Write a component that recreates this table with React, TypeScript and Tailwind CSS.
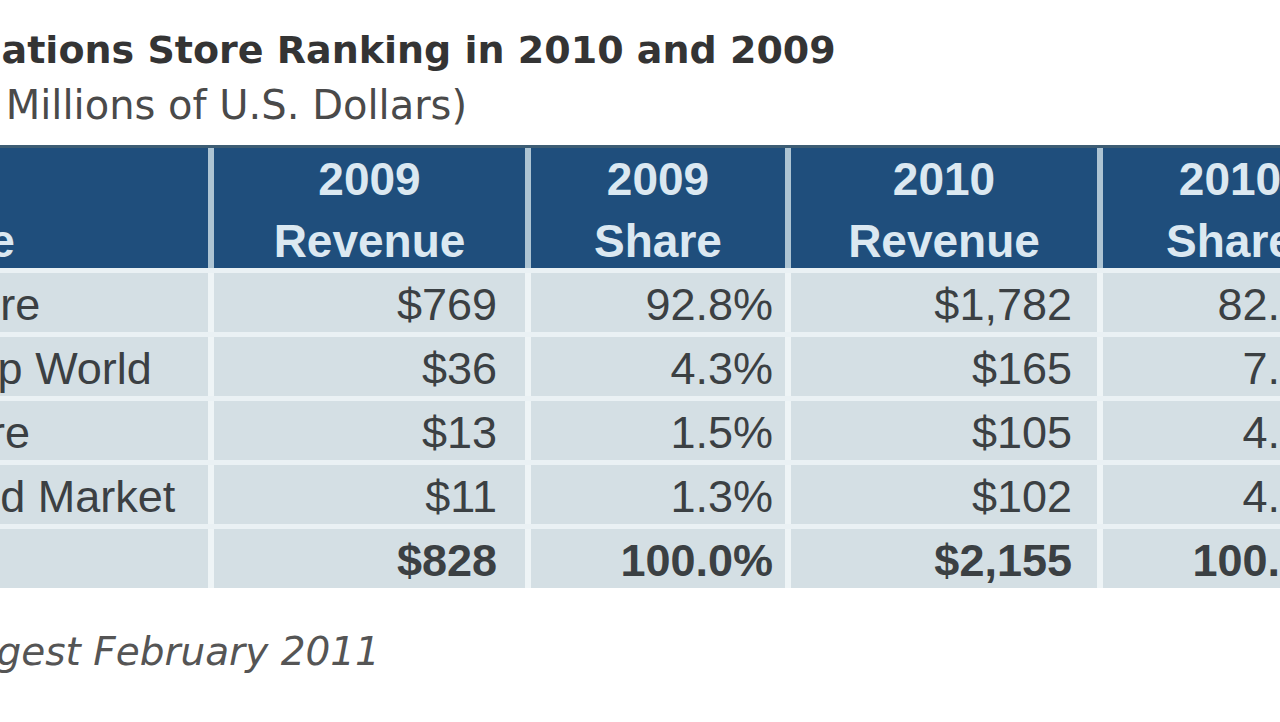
const rows = [
  { store: "Apple App Store", rev09: "$769", share09: "92.8%", rev10: "$1,782", share10: "82.7%" },
  { store: "BlackBerry App World", rev09: "$36", share09: "4.3%", rev10: "$165", share10: "7.7%" },
  { store: "Nokia Ovi Store", rev09: "$13", share09: "1.5%", rev10: "$105", share10: "4.9%" },
  { store: "Google Android Market", rev09: "$11", share09: "1.3%", rev10: "$102", share10: "4.7%" },
  { store: "Total", rev09: "$828", share09: "100.0%", rev10: "$2,155", share10: "100.0%", total: true },
];

const headers = [
  ["\u00a0", "Store"],
  ["2009", "Revenue"],
  ["2009", "Share"],
  ["2010", "Revenue"],
  ["2010", "Share"],
];

const cols = "grid grid-cols-[504px_311px_254px_306px_254px] gap-x-[6px]";

export default function App() {
  return (
    <div className="w-[1280px] h-[722px] overflow-hidden bg-white">
      <div className="-ml-[296px] w-[1700px] flex flex-col">
        <h1 className="mt-[26px] ml-[9px] font-['DejaVu_Sans',sans-serif] font-bold text-[38px] leading-[48px] text-[#343434] whitespace-nowrap">
          Mobile Applications Store Ranking in 2010 and 2009
        </h1>
        <p className="mt-[7px] ml-[50px] font-['DejaVu_Sans',sans-serif] text-[40px] leading-[48px] text-[#4a4a4a] whitespace-nowrap">
          (Revenue in Millions of U.S. Dollars)
        </p>

        <div className="mt-[16px] w-[1647px] bg-[#eaf1f4] flex flex-col gap-y-[5px] font-['Liberation_Sans',Arial,sans-serif]">
          <div className={`${cols} bg-[#adc4d3] border-t-[3px] border-[#3d5d74]`}>
            {headers.map(([a, b], i) => (
              <div
                key={i}
                className="h-[120px] bg-[#1f4e7c] text-[#dbe8f1] font-bold text-[46px] leading-[62px] text-center whitespace-nowrap"
              >
                <div>{a}</div>
                <div>{b}</div>
              </div>
            ))}
          </div>

          {rows.map((r) => (
            <div key={r.store} className={`${cols} bg-[#eef4f6]`}>
              {[
                { v: r.store, cls: "text-left pl-[11px]" },
                { v: r.rev09, cls: "text-right pr-[28px]" },
                { v: r.share09, cls: "text-right pr-[12px]" },
                { v: r.rev10, cls: "text-right pr-[25px]" },
                { v: r.share10, cls: "text-right pr-[12px]" },
              ].map((c, i) => (
                <div
                  key={i}
                  className={`h-[59px] bg-[#d4dfe4] text-[45px] leading-[63px] text-[#3b4043] whitespace-nowrap ${
                    r.total ? "font-bold text-[#2e3336]" : ""
                  } ${c.cls}`}
                >
                  {c.v}
                </div>
              ))}
            </div>
          ))}
        </div>

        <p className="mt-[40px] -ml-[134px] font-['DejaVu_Sans',sans-serif] italic text-[39px] leading-[48px] text-[#555555] whitespace-nowrap">
          Source: IHS Screen Digest February 2011
        </p>
      </div>
    </div>
  );
}
